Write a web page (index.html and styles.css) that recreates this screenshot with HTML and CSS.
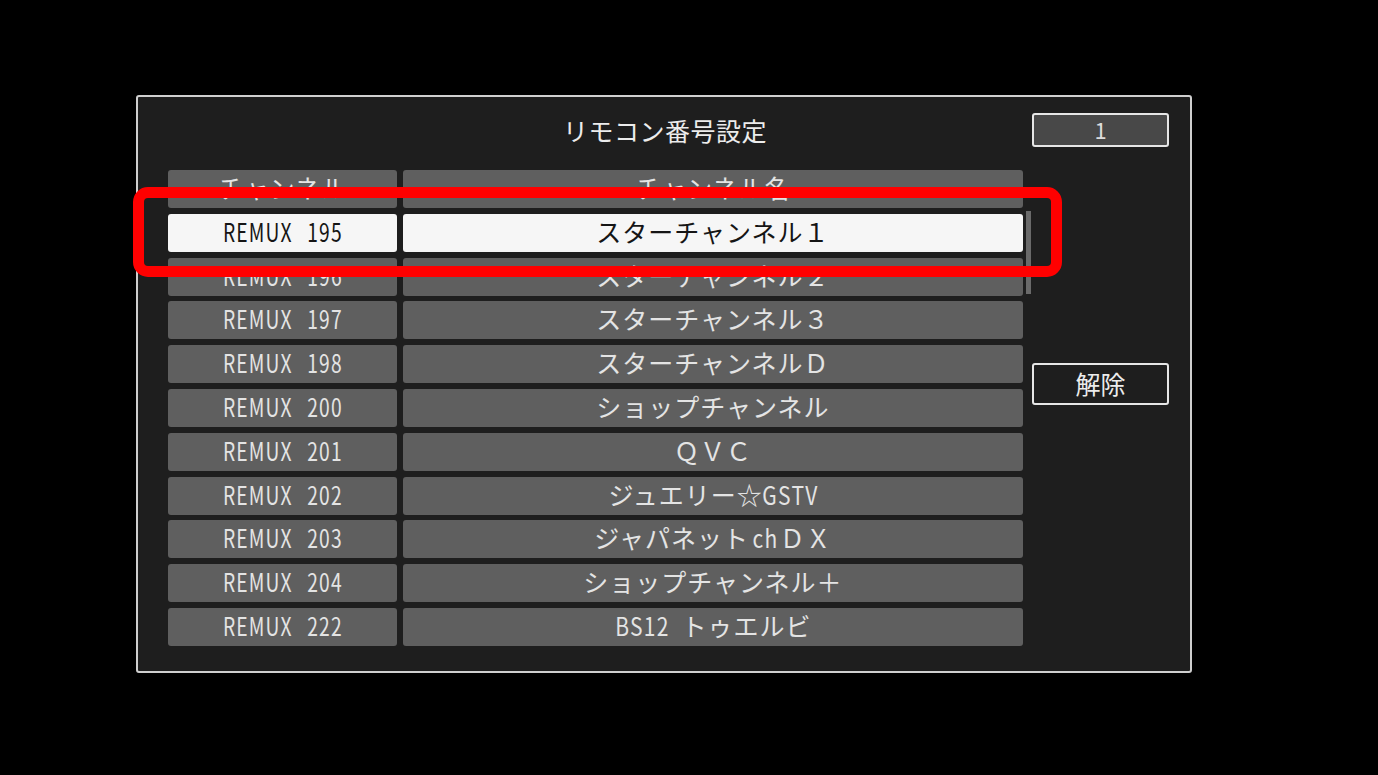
FILE: index.html
```html
<!DOCTYPE html>
<html lang="ja">
<head>
<meta charset="utf-8">
<title>リモコン番号設定</title>
<link rel="stylesheet" href="styles.css">
</head>
<body>
<div class="dialog">
  <div class="topbar">
    <div class="title">リモコン番号設定</div>
    <div class="numbox">1</div>
  </div>
  <div class="main">
    <div class="table">
      <div class="row head"><div class="cell">チャンネル</div><div class="cell">チャンネル名</div></div>
      <div class="row sel"><div class="cell"><span class="rx">REMUX 195</span></div><div class="cell">スターチャンネル１</div></div>
      <div class="row"><div class="cell"><span class="rx">REMUX 196</span></div><div class="cell">スターチャンネル２</div></div>
      <div class="row"><div class="cell"><span class="rx">REMUX 197</span></div><div class="cell">スターチャンネル３</div></div>
      <div class="row"><div class="cell"><span class="rx">REMUX 198</span></div><div class="cell">スターチャンネルＤ</div></div>
      <div class="row"><div class="cell"><span class="rx">REMUX 200</span></div><div class="cell">ショップチャンネル</div></div>
      <div class="row"><div class="cell"><span class="rx">REMUX 201</span></div><div class="cell">ＱＶＣ</div></div>
      <div class="row"><div class="cell"><span class="rx">REMUX 202</span></div><div class="cell">ジュエリー☆<span class="hw">GSTV</span></div></div>
      <div class="row"><div class="cell"><span class="rx">REMUX 203</span></div><div class="cell">ジャパネット<span class="hw short">ch</span>ＤＸ</div></div>
      <div class="row"><div class="cell"><span class="rx">REMUX 204</span></div><div class="cell">ショップチャンネル＋</div></div>
      <div class="row"><div class="cell"><span class="rx">REMUX 222</span></div><div class="cell"><span class="hw">BS12&nbsp;&nbsp;</span>トゥエルビ</div></div>
    </div>
    <div class="scroll"><div class="thumb"></div></div>
    <div class="side">
      <div class="btn">解除</div>
    </div>
  </div>
  <div class="highlight"></div>
</div>
</body>
</html>
```

FILE: styles.css
```css
html, body {
  margin: 0;
  padding: 0;
  background: #000;
}
body {
  width: 1378px;
  height: 775px;
  overflow: hidden;
  font-family: "Noto Sans CJK JP", "Noto Sans", sans-serif;
}
.dialog {
  position: relative;
  box-sizing: border-box;
  margin: 95px 0 0 136px;
  width: 1056px;
  height: 578px;
  border: 2px solid #cfcfcf;
  border-radius: 3px;
  background: #1e1e1e;
  padding: 16px 21px 0 30px;
}
.topbar {
  display: flex;
  align-items: center;
  height: 34px;
}
.title {
  flex: 1;
  text-align: center;
  padding-left: 137px;
  padding-right: 7px;
  color: #ececec;
  font-size: 25px;
  line-height: 32px;
  letter-spacing: 0.5px;
}
.numbox {
  box-sizing: border-box;
  width: 137px;
  height: 34px;
  border: 2px solid #e6e6e6;
  border-radius: 3px;
  background: #484848;
  color: #dcdcdc;
  font-size: 22px;
  line-height: 28px;
  text-align: center;
}
.main {
  display: flex;
  margin-top: 23px;
}
.table {
  width: 855px;
  display: flex;
  flex-direction: column;
  gap: 5.8px;
}
.row {
  display: grid;
  grid-template-columns: 229px 620px;
  column-gap: 6px;
  height: 38px;
}
.cell {
  background: #5f5f5f;
  border-radius: 3px;
  color: #e4e4e4;
  font-size: 25px;
  line-height: 35px;
  text-align: center;
  white-space: nowrap;
  overflow: hidden;
  letter-spacing: 1px;
}
.rx {
  display: inline-block;
  letter-spacing: 1.5px;
  word-spacing: 12px;
  transform: scaleX(0.77);
  margin: 0 -15px;
}
.hw {
  display: inline-block;
  letter-spacing: 1.5px;
  transform: scaleX(0.84);
  margin: 0 -6px;
}
.hw.short {
  margin: 0 -1px 0 1px;
}
.row.sel .cell {
  background: #f6f6f6;
  color: #151515;
}
.scroll {
  width: 6px;
  margin-left: 3px;
  padding-top: 41px;
}
.thumb {
  height: 83px;
  background: #6a6a6a;
}
.side {
  margin-left: 1px;
  padding-top: 193px;
}
.btn {
  box-sizing: border-box;
  width: 137px;
  height: 42px;
  border: 2px solid #e6e6e6;
  border-radius: 3px;
  background: #1e1e1e;
  color: #ececec;
  font-size: 25px;
  line-height: 36px;
  text-align: center;
}
.highlight {
  position: absolute;
  left: -5px;
  top: 90px;
  width: 929px;
  height: 90px;
  box-sizing: border-box;
  border: 11px solid #ff0000;
  border-radius: 15px;
}
```
